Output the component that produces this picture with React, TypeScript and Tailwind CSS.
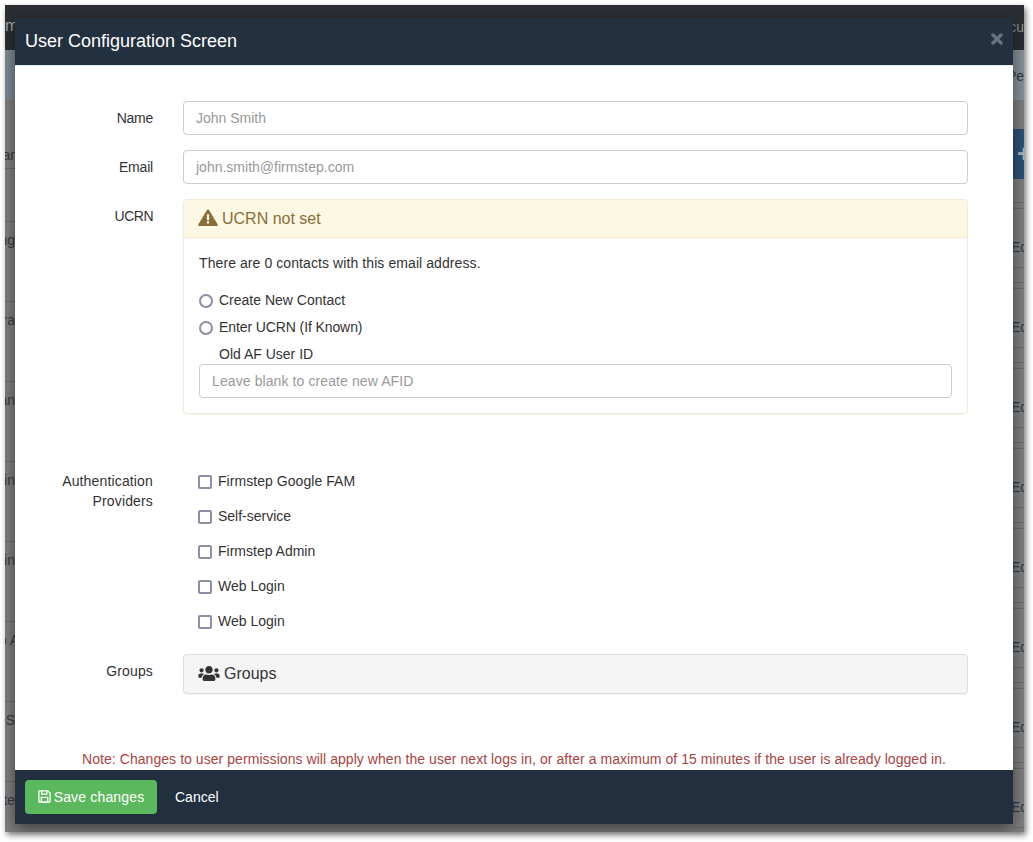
import React from "react";

const sans = "font-['Liberation_Sans',Arial,sans-serif]";

function Row({ label, top, className = "" }: { label: string; top?: string; className?: string }) {
  return (
    <div className={`w-[138px] shrink-0 text-right text-[14px] leading-[20px] text-[#333] ${top ?? ""} ${className}`}>
      {label}
    </div>
  );
}

function Radio({ label, className = "" }: { label: string; className?: string }) {
  return (
    <div className={`flex items-center h-[20px] text-[14px] text-[#333] ${className}`}>
      <span className="w-[14px] h-[14px] rounded-full border-2 border-[#8f8ea3] bg-white mr-[6px] mt-[1px] box-border" />
      {label}
    </div>
  );
}

function Check({ label, className = "" }: { label: string; className?: string }) {
  return (
    <div className={`flex items-center h-[20px] text-[14px] text-[#333] ${className}`}>
      <span className="w-[14px] h-[14px] rounded-[2px] border-2 border-[#8f8ea3] bg-white mr-[6px] mt-[1px] box-border" />
      {label}
    </div>
  );
}

const leftClips = [
  { t: "ar", y: "top-[140px]", s: "" },
  { t: "ng", y: "top-[225px]", s: "" },
  { t: "ra", y: "top-[305px]", s: "" },
  { t: "an", y: "top-[385px]", s: "" },
  { t: "in", y: "top-[465px]", s: "" },
  { t: "in", y: "top-[545px]", s: "" },
  { t: "p A", y: "top-[625px]", s: "-mr-[4px]" },
  { t: "oS", y: "top-[705px]", s: "" },
  { t: "te", y: "top-[785px]", s: "" },
];

const rowLines = [
  "top-[163px]", "top-[216px]", "top-[296px]", "top-[376px]", "top-[456px]",
  "top-[536px]", "top-[616px]", "top-[696px]", "top-[776px]",
];
const rightLines = [
  "top-[197px]", "top-[203px]", "top-[262px]", "top-[277px]", "top-[283px]", "top-[342px]",
  "top-[357px]", "top-[363px]", "top-[422px]", "top-[437px]", "top-[443px]", "top-[502px]",
  "top-[517px]", "top-[523px]", "top-[582px]", "top-[597px]", "top-[603px]", "top-[662px]",
  "top-[677px]", "top-[683px]", "top-[742px]", "top-[757px]", "top-[763px]", "top-[822px]",
];
const edits = [
  "top-[232px]", "top-[312px]", "top-[392px]", "top-[472px]", "top-[552px]", "top-[632px]", "top-[712px]", "top-[792px]",
];

export default function App() {
  return (
    <div className={`w-[1033px] h-[842px] bg-white overflow-hidden ${sans}`}>
      <div className="relative ml-[5px] mt-[5px] w-[1019px] h-[827px] bg-[#7f7f7f] overflow-hidden shadow-[2px_3px_6px_rgba(0,0,0,0.55)] pt-0">
        {/* dimmed page behind the modal */}
        <div className="h-[45px] bg-[#2b2f33]" />
        <div className="h-[50px] bg-gradient-to-r from-[#7d8a92] to-[#86919a]" />
        <div className="absolute left-0 top-[11px] text-[16px] leading-[20px] text-[#a0a4a8]">m</div>
        <div className="absolute right-0 top-[12px] text-[14px] leading-[20px] text-[#8f9498]">cu</div>
        <div className="absolute right-0 top-[61px] text-[14px] leading-[20px] text-[#2f3a42]">Pe</div>
        <div className="absolute right-0 top-[124px] w-[11px] h-[50px] bg-[#2c5275] overflow-hidden pl-[4px] whitespace-nowrap text-[#a8b8c6] text-[24px] font-bold leading-[50px]">+</div>
        {leftClips.map((c, i) => (
          <div key={i} className={`absolute left-0 w-[10px] overflow-hidden text-[14px] leading-[20px] text-[#3a3a3a] ${c.y}`}>
            <span className={`float-right whitespace-nowrap ${c.s}`}>{c.t}</span>
          </div>
        ))}
        {rowLines.map((y) => (
          <div key={y} className={`absolute left-0 w-[10px] h-px bg-[#6c6c6c] ${y}`} />
        ))}
        {rightLines.map((y) => (
          <div key={y} className={`absolute right-0 w-[11px] h-px bg-[#6c6c6c] ${y}`} />
        ))}
        {edits.map((y) => (
          <div key={y} className={`absolute right-0 w-[13px] overflow-hidden whitespace-nowrap text-[14px] leading-[20px] text-[#2d3d4e] ${y}`}>
            Ed
          </div>
        ))}

        {/* modal */}
        <div className="absolute left-[10px] top-[13px] w-[998px] h-[806px] flex flex-col bg-white shadow-[0_5px_15px_rgba(0,0,0,0.5)]">
          <div className="h-[48px] box-border shrink-0 bg-[#22303f] border-b border-[#e5e9ee] flex items-center pl-[10px] pr-[10px] pb-[2px] relative">
            <span className="text-[18px] leading-[20px] text-white">User Configuration Screen</span>
            <svg width="12" height="12" viewBox="0 0 12 12" className="absolute right-[10px] top-[15px]" aria-hidden="true">
              <path d="M2 2 L10 10 M10 2 L2 10" stroke="#66727f" strokeWidth="3.4" strokeLinecap="round" />
            </svg>
          </div>

          <div className="flex-1 min-h-0 flex flex-col pt-[35px]">
            <div className="flex gap-[30px] h-[34px] mb-[15px] items-center">
              <Row label="Name" className="tracking-[-0.25px]" />
              <div className="w-[785px] h-[34px] border border-[#ccc] rounded-[4px] px-[12px] text-[14px] leading-[32px] text-[#999]">John Smith</div>
            </div>
            <div className="flex gap-[30px] h-[34px] mb-[15px] items-center">
              <Row label="Email" className="tracking-[-0.2px]" />
              <div className="w-[785px] h-[34px] border border-[#ccc] rounded-[4px] px-[12px] text-[14px] leading-[32px] text-[#999]">john.smith@firmstep.com</div>
            </div>

            <div className="flex gap-[30px] items-start">
              <Row label="UCRN" top="pt-[7px]" className="tracking-[-0.5px]" />
              <div className="w-[785px] h-[215px] border border-[#f4ead1] rounded-[4px] shadow-[0_1px_1px_rgba(0,0,0,0.05)]">
                <div className="h-[38px] bg-[#fcf8e3] border-b border-[#faebcc] flex items-center px-[15px] text-[16px] text-[#8a6d3b] rounded-t-[3px]">
                  <svg width="20" height="17" viewBox="0 0 19 16" className="-ml-[1px] mr-[4px] -mt-[2px]">
                    <path d="M9.5 0.5c.5 0 .9.3 1.1.7l8 13.2c.5.8 0 1.6-1 1.6H1.4c-1 0-1.5-.8-1-1.6l8-13.2c.2-.4.6-.7 1.1-.7z" fill="#8a6d3b" />
                    <rect x="8.4" y="5" width="2.2" height="5.6" rx="0.6" fill="#fcf8e3" />
                    <rect x="8.4" y="11.6" width="2.2" height="2.2" rx="0.5" fill="#fcf8e3" />
                  </svg>
                  UCRN not set
                </div>
                <div className="px-[15px] pt-[15px]">
                  <div className="text-[14px] leading-[20px] text-[#333] mb-[17px] tracking-[0.085px]">There are 0 contacts with this email address.</div>
                  <div className="flex flex-col gap-[7px]">
                    <Radio label="Create New Contact" />
                    <Radio label="Enter UCRN (If Known)" className="tracking-[-0.1px]" />
                  </div>
                  <div className="pl-[20px] text-[14px] leading-[20px] text-[#333] mt-[7px]">Old AF User ID</div>
                  <div className="h-[34px] border border-[#ccc] rounded-[4px] px-[12px] text-[14px] leading-[32px] text-[#999] tracking-[0.1px]">Leave blank to create new AFID</div>
                </div>
              </div>
            </div>

            <div className="flex gap-[30px] mt-[57px] items-start">
              <Row label="Authentication Providers" className="tracking-[0.15px]" />
              <div className="flex flex-col gap-[15px] ml-[15px]">
                <Check label="Firmstep Google FAM" className="tracking-[0.05px]" />
                <Check label="Self-service" />
                <Check label="Firmstep Admin" />
                <Check label="Web Login" />
                <Check label="Web Login" />
              </div>
            </div>

            <div className="flex gap-[30px] mt-[23px] items-start">
              <Row label="Groups" top="pt-[7px]" className="tracking-[0.15px]" />
              <div className="w-[785px] h-[40px] bg-[#f5f5f5] border border-[#ddd] rounded-[4px] flex items-center px-[15px] text-[16px] text-[#333] shadow-[0_1px_1px_rgba(0,0,0,0.05)]">
                <svg width="22" height="17" viewBox="0 0 640 512" className="-ml-[1px] mr-[4px] -mt-[1px]" fill="#333">
                  <path d="M96 224c35.300 0 64-28.700 64-64s-28.700-64-64-64-64 28.700-64 64 28.700 64 64 64zm448 0c35.300 0 64-28.700 64-64s-28.700-64-64-64-64 28.700-64 64 28.700 64 64 64zm32 32h-64c-17.600 0-33.500 7.100-45.100 18.600 40.300 22.100 68.900 62 75.100 109.400h66c17.700 0 32-14.300 32-32v-32c0-35.300-28.700-64-64-64zm-256 0c61.900 0 112-50.100 112-112S381.900 32 320 32 208 82.100 208 144s50.100 112 112 112zm76.800 32h-8.300c-20.800 10-43.900 16-68.500 16s-47.600-6-68.500-16h-8.300C179.600 288 128 339.600 128 403.200V432c0 26.500 21.500 48 48 48h288c26.500 0 48-21.500 48-48v-28.800c0-63.600-51.600-115.200-115.200-115.200zm-223.700-13.400C161.500 263.100 145.600 256 128 256H64c-35.300 0-64 28.700-64 64v32c0 17.700 14.300 32 32 32h65.900c6.300-47.400 34.900-87.300 75.200-109.400z" />
                </svg>
                Groups
              </div>
            </div>

            <div className="mt-[55px] text-center text-[14px] leading-[20px] text-[#a94442] whitespace-nowrap tracking-[0.057px]">
              Note: Changes to user permissions will apply when the user next logs in, or after a maximum of 15 minutes if the user is already logged in.
            </div>
          </div>

          <div className="h-[54px] shrink-0 bg-[#212f3f] flex items-center pl-[10px]">
            <div className="h-[34px] w-[132px] bg-[#5cb85c] rounded-[4px] flex items-center justify-center text-[14px] text-white tracking-[0.16px]">
              <svg width="13" height="13" viewBox="0 0 14 14" className="mr-[3px] -mt-[2px]" fill="none" stroke="#fff" strokeWidth="1.4">
                <path d="M1.500 1h9.200l2.300 2.300v8.700a1 1 0 0 1-1 1h-10.500a.5.5 0 0 1-.5-.5v-11a.5.5 0 0 1 .5-.5z" />
                <path d="M4 1v3.500h5.500v-3.500" />
                <rect x="3.500" y="8" width="7" height="5" />
              </svg>
              Save changes
            </div>
            <div className="ml-[18px] text-[14px] text-white">Cancel</div>
          </div>
        </div>
      </div>
    </div>
  );
}
